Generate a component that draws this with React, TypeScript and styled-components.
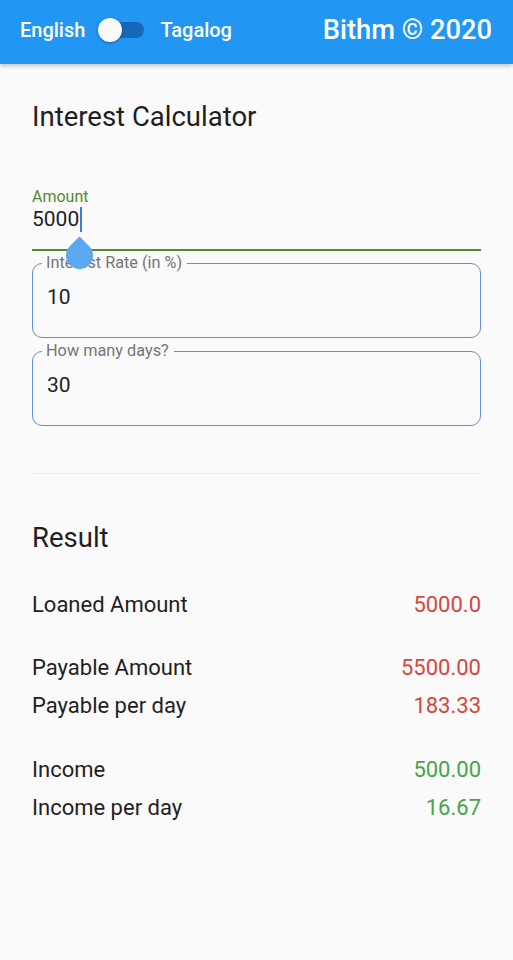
import React from "react";
import styled, { createGlobalStyle } from "styled-components";

const GlobalStyle = createGlobalStyle`
  html, body { margin: 0; padding: 0; background: #fafafa; }
  body { font-family: Roboto, "Noto Sans", Arial, sans-serif; color: #1f1f1f; }
  * { box-sizing: border-box; }
`;

const Page = styled.div`
  width: 513px;
  min-height: 960px;
  background: #fafafa;
`;

const AppBar = styled.header`
  height: 64px;
  background: #2196f3;
  display: flex;
  align-items: center;
  justify-content: space-between;
  padding: 0 21px 5px 20px;
  box-shadow: 0 2px 4px rgba(0, 0, 0, 0.22);
  color: #fff;
`;

const LangGroup = styled.div`
  display: flex;
  align-items: center;
`;

const LangLabel = styled.span`
  font-size: 20px;
  font-weight: 500;
`;

const Switch = styled.div`
  position: relative;
  width: 46px;
  height: 24px;
  margin: 0 16px 0 13px;
`;

const Track = styled.div`
  position: absolute;
  left: 8px;
  right: 0;
  top: 4px;
  height: 16px;
  border-radius: 8px;
  background: #1769b8;
`;

const Thumb = styled.div`
  position: absolute;
  left: 0;
  top: 0;
  width: 24px;
  height: 24px;
  border-radius: 50%;
  background: #fafafa;
  box-shadow: 0 1px 3px rgba(0, 0, 0, 0.35);
`;

const Brand = styled.div`
  font-size: 27.3px;
  font-weight: 500;
`;

const Content = styled.main`
  padding: 0 32px;
`;

const Title = styled.h1`
  margin: 0;
  padding-top: 37px;
  font-size: 27.5px;
  font-weight: 400;
  line-height: 32px;
  color: #1f1f1f;
`;

const UnderlineField = styled.div`
  position: relative;
  margin-top: 55px;
  border-bottom: 2px solid #558b2f;
  padding-bottom: 17px;
`;

const FloatLabel = styled.div`
  font-size: 16px;
  line-height: 18px;
  color: #558b2f;
`;

const ValueText = styled.div`
  display: flex;
  align-items: center;
  font-size: 21px;
  line-height: 26px;
  color: #1f1f1f;
`;

const Caret = styled.span`
  display: inline-block;
  width: 2px;
  height: 25px;
  margin-left: 1px;
  background: #3d7de0;
`;

const Handle = styled.div`
  position: absolute;
  left: 34px;
  bottom: -20px;
  width: 27px;
  height: 27px;
  background: #5aa8f0;
  border-radius: 0 50% 50% 50%;
  transform: rotate(45deg);
`;

const Outlined = styled.fieldset<{ $top: number }>`
  margin: ${(p) => p.$top}px 0 0;
  padding: 0 14px;
  min-width: 0;
  height: 83px;
  border: 1.5px solid #5f8fd8;
  border-radius: 10px;
`;

const Legend = styled.legend`
  margin-left: -5px;
  padding: 0 5px 0 4px;
  font-size: 16.3px;
  line-height: 16px;
  color: #757575;
`;

const OutlinedValue = styled.div`
  padding-top: 14px;
  font-size: 21px;
  line-height: 24px;
  color: #1f1f1f;
`;

const Divider = styled.hr`
  margin: 47px 0 0;
  border: 0;
  border-top: 1.5px solid #efefef;
`;

const SectionTitle = styled.h2`
  margin: 0;
  padding-top: 48px;
  font-size: 27.5px;
  font-weight: 400;
  line-height: 32px;
  color: #1f1f1f;
`;

const Group = styled.div<{ $top: number }>`
  margin-top: ${(p) => p.$top}px;
  display: flex;
  flex-direction: column;
  gap: 12px;
`;

const Row = styled.div`
  display: flex;
  justify-content: space-between;
  align-items: center;
  font-size: 22px;
  line-height: 26px;
`;

const RowLabel = styled.span`
  color: #1f1f1f;
`;

const RowValue = styled.span<{ $tone: "red" | "green" }>`
  color: ${(p) => (p.$tone === "red" ? "#d4463f" : "#48a34c")};
`;

export default function App() {
  return (
    <Page>
      <GlobalStyle />
      <AppBar>
        <LangGroup>
          <LangLabel>English</LangLabel>
          <Switch>
            <Track />
            <Thumb />
          </Switch>
          <LangLabel>Tagalog</LangLabel>
        </LangGroup>
        <Brand>Bithm © 2020</Brand>
      </AppBar>
      <Content>
        <Title>Interest Calculator</Title>
        <UnderlineField>
          <FloatLabel>Amount</FloatLabel>
          <ValueText>
            5000
            <Caret />
          </ValueText>
          <Handle />
        </UnderlineField>
        <Outlined $top={4}>
          <Legend>Interest Rate (in %)</Legend>
          <OutlinedValue>10</OutlinedValue>
        </Outlined>
        <Outlined $top={5}>
          <Legend>How many days?</Legend>
          <OutlinedValue>30</OutlinedValue>
        </Outlined>
        <Divider />
        <SectionTitle>Result</SectionTitle>
        <Group $top={38}>
          <Row>
            <RowLabel>Loaned Amount</RowLabel>
            <RowValue $tone="red">5000.0</RowValue>
          </Row>
        </Group>
        <Group $top={37}>
          <Row>
            <RowLabel>Payable Amount</RowLabel>
            <RowValue $tone="red">5500.00</RowValue>
          </Row>
          <Row>
            <RowLabel>Payable per day</RowLabel>
            <RowValue $tone="red">183.33</RowValue>
          </Row>
        </Group>
        <Group $top={38}>
          <Row>
            <RowLabel>Income</RowLabel>
            <RowValue $tone="green">500.00</RowValue>
          </Row>
          <Row>
            <RowLabel>Income per day</RowLabel>
            <RowValue $tone="green">16.67</RowValue>
          </Row>
        </Group>
      </Content>
    </Page>
  );
}
